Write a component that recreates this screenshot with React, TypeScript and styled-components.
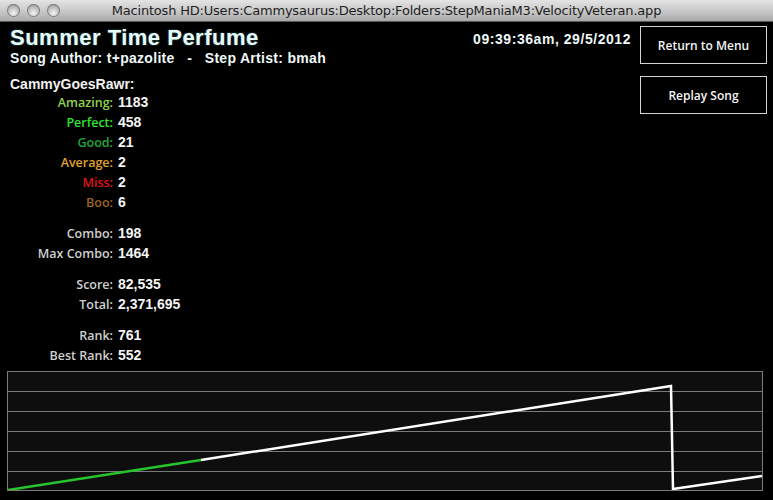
import React from "react";
import styled, { createGlobalStyle } from "styled-components";

const GlobalStyle = createGlobalStyle`
  html, body {
    margin: 0;
    padding: 0;
    background: #000;
  }
`;

const Window = styled.div`
  width: 773px;
  height: 500px;
  background: #000;
  display: flex;
  flex-direction: column;
  overflow: hidden;
`;

const TitleBar = styled.div`
  height: 22px;
  flex: none;
  display: flex;
  align-items: center;
  background: linear-gradient(#e4e4e4, #c4c4c4 60%, #a9a9a9);
  border-bottom: 1px solid #555;
  box-sizing: border-box;
`;

const Lights = styled.div`
  display: flex;
  gap: 7px;
  padding-left: 7px;
`;

const Light = styled.span`
  width: 13px;
  height: 13px;
  border-radius: 50%;
  background: radial-gradient(circle at 50% 70%, #f4f4f4, #b9b9b9 55%, #8a8a8a);
  box-shadow: inset 0 0 0 1px #7d7d7d;
`;

const WindowTitle = styled.div`
  flex: 1;
  text-align: center;
  margin-right: 60px;
  font-family: "DejaVu Sans", "Liberation Sans", sans-serif;
  font-size: 13px;
  color: #1e1e1e;
  letter-spacing: -0.2px;
`;

const Main = styled.div`
  flex: 1;
  display: flex;
  flex-direction: column;
`;

const Header = styled.div`
  display: flex;
  justify-content: space-between;
`;

const LeftCol = styled.div`
  padding-left: 10px;
  padding-top: 4px;
`;

const SongTitle = styled.div`
  font-family: "Liberation Sans", Arial, sans-serif;
  font-weight: bold;
  font-size: 22px;
  letter-spacing: 0.5px;
  line-height: 24px;
  color: #e8fbfb;
  text-shadow: 0 0 2px rgba(130, 255, 255, 0.45);
`;

const Credits = styled.div`
  font-family: "Liberation Sans", Arial, sans-serif;
  font-weight: bold;
  font-size: 14px;
  line-height: 16px;
  color: #eef8f8;
  white-space: pre;
  letter-spacing: 0.3px;
`;

const Player = styled.div`
  margin-top: 10px;
  font-family: "Liberation Sans", Arial, sans-serif;
  font-weight: bold;
  font-size: 14px;
  line-height: 16px;
  color: #f2f2f2;
`;

const RightCol = styled.div`
  display: flex;
  gap: 9px;
  padding-top: 4px;
  padding-right: 6px;
`;

const Stamp = styled.div`
  font-family: "Liberation Sans", Arial, sans-serif;
  font-weight: bold;
  font-size: 14px;
  letter-spacing: 0.55px;
  color: #eef8f8;
  padding-top: 5px;
`;

const Buttons = styled.div`
  display: flex;
  flex-direction: column;
  gap: 12px;
`;

const Button = styled.button`
  width: 127px;
  height: 38px;
  background: #000;
  border: 1px solid #d4d4d4;
  color: #f4f4f4;
  font-family: "Open Sans", sans-serif;
  font-weight: 600;
  font-size: 12px;
  padding: 0;
  cursor: pointer;
`;

const Stats = styled.div`
  display: flex;
  flex-direction: column;
  gap: 11px;
`;

const Group = styled.div`
  display: grid;
  grid-template-columns: 103px auto;
  column-gap: 5px;
  grid-auto-rows: 20px;
  align-items: center;
`;

const Label = styled.span<{ $color: string }>`
  text-align: right;
  font-family: "Open Sans", sans-serif;
  font-weight: 600;
  font-size: 12.5px;
  color: ${(p) => p.$color};
`;

const Value = styled.span`
  font-family: "Liberation Sans", Arial, sans-serif;
  font-weight: bold;
  font-size: 14px;
  color: #f4f4f4;
`;

const Graph = styled.div`
  margin: 6px 10px 0 7px;
  height: 120px;
  background: #0e0e0e;
  border: 1px solid #7a7a7a;
  box-sizing: border-box;
  background-image: repeating-linear-gradient(
    to bottom,
    transparent 0,
    transparent 19px,
    #7a7a7a 19px,
    #7a7a7a 20px
  );
`;

const groups: { label: string; value: string; color: string }[][] = [
  [
    { label: "Amazing:", value: "1183", color: "#8fd24a" },
    { label: "Perfect:", value: "458", color: "#2ee62e" },
    { label: "Good:", value: "21", color: "#22a83a" },
    { label: "Average:", value: "2", color: "#e0a12c" },
    { label: "Miss:", value: "2", color: "#e01414" },
    { label: "Boo:", value: "6", color: "#9a6226" },
  ],
  [
    { label: "Combo:", value: "198", color: "#cfcfcf" },
    { label: "Max Combo:", value: "1464", color: "#cfcfcf" },
  ],
  [
    { label: "Score:", value: "82,535", color: "#cfcfcf" },
    { label: "Total:", value: "2,371,695", color: "#cfcfcf" },
  ],
  [
    { label: "Rank:", value: "761", color: "#cfcfcf" },
    { label: "Best Rank:", value: "552", color: "#cfcfcf" },
  ],
];

const App = () => {
  return (
    <Window>
      <GlobalStyle />
      <TitleBar>
        <Lights>
          <Light />
          <Light />
          <Light />
        </Lights>
        <WindowTitle>Macintosh HD:Users:Cammysaurus:Desktop:Folders:StepManiaM3:VelocityVeteran.app</WindowTitle>
      </TitleBar>
      <Main>
        <Header>
          <LeftCol>
            <SongTitle>Summer Time Perfume</SongTitle>
            <Credits>{"Song Author: t+pazolite   -   Step Artist: bmah"}</Credits>
            <Player>CammyGoesRawr:</Player>
            <Stats>
              {groups.map((g, i) => (
                <Group key={i}>
                  {g.map((s) => (
                    <React.Fragment key={s.label}>
                      <Label $color={s.color}>{s.label}</Label>
                      <Value>{s.value}</Value>
                    </React.Fragment>
                  ))}
                </Group>
              ))}
            </Stats>
          </LeftCol>
          <RightCol>
            <Stamp>09:39:36am, 29/5/2012</Stamp>
            <Buttons>
              <Button>Return to Menu</Button>
              <Button>Replay Song</Button>
            </Buttons>
          </RightCol>
        </Header>
        <Graph>
          <svg width="100%" height="100%" viewBox="0 0 754 118" preserveAspectRatio="none">
            <polyline points="0,118 193,88" fill="none" stroke="#28c42c" strokeWidth="2.5" />
            <polyline
              points="193,88 663,14 665,117 754,104"
              fill="none"
              stroke="#ffffff"
              strokeWidth="2.5"
            />
          </svg>
        </Graph>
      </Main>
    </Window>
  );
};

export default App;
